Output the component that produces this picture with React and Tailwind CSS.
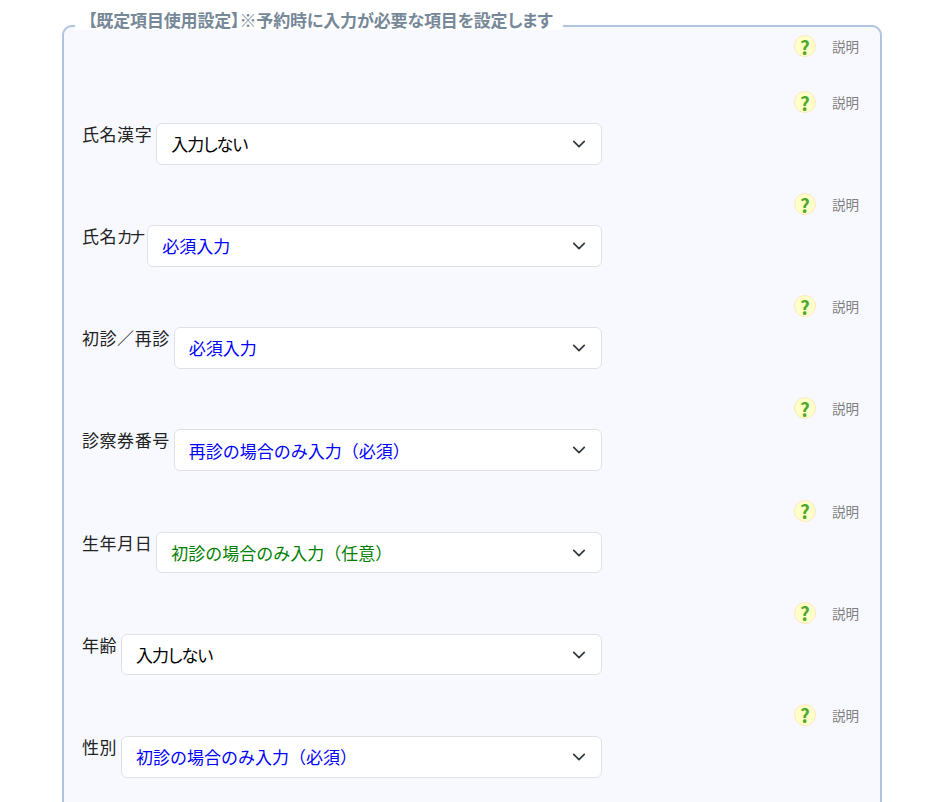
const rows = [
  { label: "氏名漢字", value: "入力しない", color: "text-black", fit: "[font-feature-settings:'palt'] tracking-[-1px]" },
  { label: <>氏名<span className="text-[16px] tracking-[-2px]">カナ</span></>, value: "必須入力", color: "text-[#0000ff]", fit: "" },
  { label: "初診／再診", value: "必須入力", color: "text-[#0000ff]", fit: "" },
  { label: "診察券番号", value: "再診の場合のみ入力（必須）", color: "text-[#0000ff]", fit: "" },
  { label: "生年月日", value: "初診の場合のみ入力（任意）", color: "text-[#008000]", fit: "" },
  { label: "年齢", value: "入力しない", color: "text-black", fit: "[font-feature-settings:'palt'] tracking-[-1px]" },
  { label: "性別", value: "初診の場合のみ入力（必須）", color: "text-[#0000ff]", fit: "" },
];

function Help() {
  return (
    <div className="flex h-[24px] items-center justify-end">
      <span className="flex h-[22px] w-[22px] items-center justify-center rounded-full border border-[#fde8c0] bg-[#ffffc8] text-[19px] font-bold leading-none text-[#4ea72e]">
        ?
      </span>
      <span className="ml-[16px] text-[13.5px] text-[#808080]">説明</span>
    </div>
  );
}

function Row({ label, value, color, fit }) {
  return (
    <div>
      <Help />
      <div className="mt-[9px] flex w-[520px] items-start">
        <label className="relative z-10 mt-[-1px] mr-[4px] text-[17px] leading-[24px] tracking-[0.55px] text-[#222] [font-feature-settings:'palt']">
          {label}
        </label>
        <div className="relative flex-1">
          <select
            defaultValue={value}
            className={`h-[41.6px] w-full appearance-none rounded-[6px] border border-[#dee2e6] bg-white pl-[14px] text-[17px] outline-none ${color} ${fit}`}
          >
            <option>{value}</option>
          </select>
          <svg
            viewBox="0 0 16 16"
            className="pointer-events-none absolute right-[16px] top-[14px] h-[14px] w-[14px]"
            fill="none"
            stroke="#343a40"
            strokeWidth="2"
            strokeLinecap="round"
            strokeLinejoin="round"
          >
            <path d="m2 5 6 6 6-6" />
          </svg>
        </div>
      </div>
    </div>
  );
}

export default function App() {
  return (
    <div className="bg-white px-[62px] pt-[16px] font-['Noto_Sans_CJK_JP','Liberation_Sans',sans-serif] w-[938px]">
      <fieldset className="w-[820px] rounded-[10px] border-2 border-[#b0c4de] bg-[#f8f9ff] pb-[40px] pl-[18px] pr-[21px]">
        <legend className="relative -top-[6px] ml-[-7px] h-[20px] bg-white pl-[13px] pr-[11px] text-[17px] font-bold leading-[20px] tracking-[-0.15px] text-[#778899] [font-feature-settings:'palt']">
          【既定項目使用設定】※予約時に入力が必要な項目を設定します
        </legend>
        <div className="-mt-[2px]">
          <Help />
        </div>
        <div className="mt-[32px] flex flex-col gap-[27.57px]">
          {rows.map((r, i) => (
            <Row key={i} {...r} />
          ))}
        </div>
      </fieldset>
    </div>
  );
}
